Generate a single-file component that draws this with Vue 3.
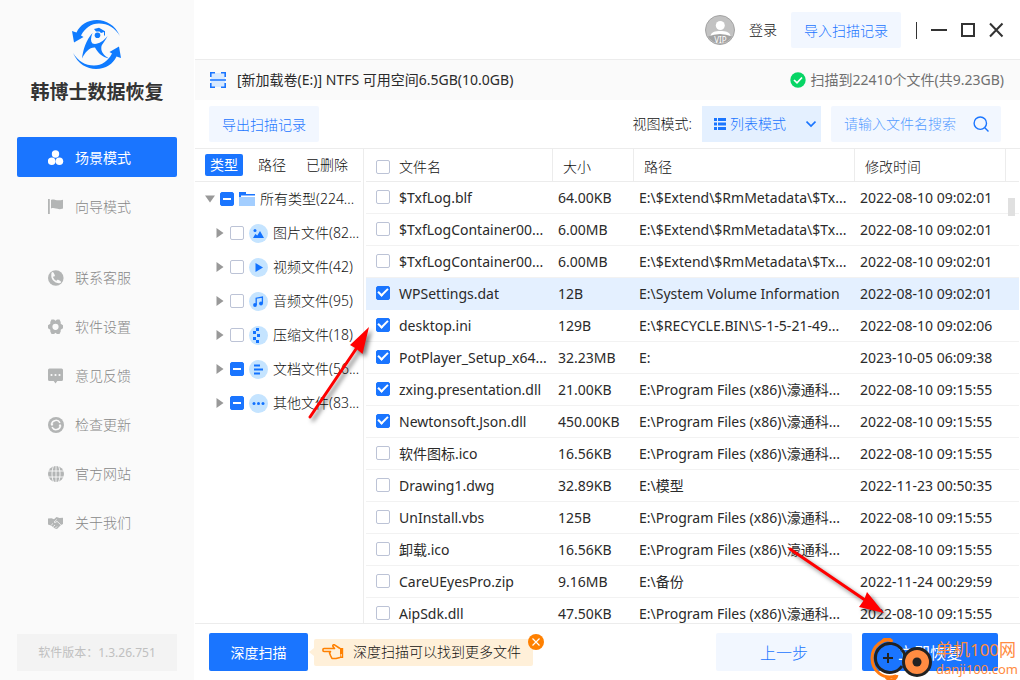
<script setup>
import { ref } from 'vue'

const nav = [
  { label: '场景模式', icon: 'scene', active: true },
  { label: '向导模式', icon: 'flag' },
  { label: '联系客服', icon: 'phone', spaced: true },
  { label: '软件设置', icon: 'gear' },
  { label: '意见反馈', icon: 'chat' },
  { label: '检查更新', icon: 'update' },
  { label: '官方网站', icon: 'globe' },
  { label: '关于我们', icon: 'hands' },
]

const tabs = ['类型', '路径', '已删除']

const tree = ref([
  { label: '图片文件(82...', icon: 'image', checked: false, mixed: false },
  { label: '视频文件(42)', icon: 'video', checked: false, mixed: false },
  { label: '音频文件(95)', icon: 'music', checked: false, mixed: false },
  { label: '压缩文件(18)', icon: 'zip', checked: false, mixed: false },
  { label: '文档文件(56...', icon: 'doc', checked: false, mixed: true },
  { label: '其他文件(83...', icon: 'other', checked: false, mixed: true },
])

const files = ref([
  { name: '$TxfLog.blf', size: '64.00KB', path: 'E:\\$Extend\\$RmMetadata\\$Tx...', time: '2022-08-10 09:02:01', checked: false },
  { name: '$TxfLogContainer00...', size: '6.00MB', path: 'E:\\$Extend\\$RmMetadata\\$Tx...', time: '2022-08-10 09:02:01', checked: false },
  { name: '$TxfLogContainer00...', size: '6.00MB', path: 'E:\\$Extend\\$RmMetadata\\$Tx...', time: '2022-08-10 09:02:01', checked: false },
  { name: 'WPSettings.dat', size: '12B', path: 'E:\\System Volume Information', time: '2022-08-10 09:02:01', checked: true, current: true },
  { name: 'desktop.ini', size: '129B', path: 'E:\\$RECYCLE.BIN\\S-1-5-21-49...', time: '2022-08-10 09:02:06', checked: true },
  { name: 'PotPlayer_Setup_x64...', size: '32.23MB', path: 'E:', time: '2023-10-05 06:09:38', checked: true },
  { name: 'zxing.presentation.dll', size: '21.00KB', path: 'E:\\Program Files (x86)\\濠通科...', time: '2022-08-10 09:15:55', checked: true },
  { name: 'Newtonsoft.Json.dll', size: '450.00KB', path: 'E:\\Program Files (x86)\\濠通科...', time: '2022-08-10 09:15:55', checked: true },
  { name: '软件图标.ico', size: '16.56KB', path: 'E:\\Program Files (x86)\\濠通科...', time: '2022-08-10 09:15:55', checked: false },
  { name: 'Drawing1.dwg', size: '32.89KB', path: 'E:\\模型', time: '2022-11-23 00:50:35', checked: false },
  { name: 'UnInstall.vbs', size: '125B', path: 'E:\\Program Files (x86)\\濠通科...', time: '2022-08-10 09:15:55', checked: false },
  { name: '卸载.ico', size: '16.56KB', path: 'E:\\Program Files (x86)\\濠通科...', time: '2022-08-10 09:15:55', checked: false },
  { name: 'CareUEyesPro.zip', size: '9.16MB', path: 'E:\\备份', time: '2022-11-24 00:29:59', checked: false },
  { name: 'AipSdk.dll', size: '47.50KB', path: 'E:\\Program Files (x86)\\濠通科...', time: '2022-08-10 09:15:55', checked: false },
])
</script>

<template>
  <div class="app">
    <aside class="sidebar">
      <svg class="logo" viewBox="0 0 50 50" fill="#0f7bff" aria-hidden="true">
        <path d="M48 16C43 5 34 0 25 0C15 0 8 5 4.500 12.500L0 11L2 22.500L11.500 17L9 15.500C13 8 19 3.500 27 3.500C36 3.500 43 8 48 16Z" />
        <path transform="rotate(180 24.500 24.500)" d="M48 16C43 5 34 0 25 0C15 0 8 5 4.500 12.500L0 11L2 22.500L11.500 17L9 15.500C13 8 19 3.500 27 3.500C36 3.500 43 8 48 16Z" />
        <circle cx="25.500" cy="15.300" r="2.800" />
        <path d="M22 9L27 7.800L33 11.200V15.500H32V12L29 13L27.500 11.500L24 11.500Z" />
        <path d="M10 38.500C11 30 14 20 20.500 13C18.500 18 18.500 21.500 20.500 23.500C25 25 31 22 35.500 16C33 22 29.500 24 29.300 27.500C29 32 32 35.500 37 38.500C30 37 26 33 23 27.500C18 27 13 32 10 38.500Z" />
      </svg>
      <h1 class="brand">韩博士数据恢复</h1>
      <nav class="nav">
        <a v-for="n in nav" :key="n.label" href="#" class="nav-item" :class="{ active: n.active, spaced: n.spaced }">
          <svg class="nav-icon" viewBox="0 0 16 16" fill="currentColor" aria-hidden="true">
            <g v-if="n.icon === 'scene'">
              <circle cx="7.500" cy="4" r="3.700" /><circle cx="3.700" cy="11.200" r="3.800" /><circle cx="11.400" cy="11.200" r="3.800" />
            </g>
            <g v-else-if="n.icon === 'flag'">
              <path d="M0 0H1.800V15H0ZM3 1C6-.5 8 2.500 15 .8V9.500C9 11.500 7 8 3 9.500Z" />
            </g>
            <g v-else-if="n.icon === 'phone'">
              <circle cx="7.800" cy="8" r="7.800" />
              <path d="M4.300 3.500C3 8.500 7 13 11.800 12.300" fill="none" stroke="#fafafa" stroke-width="1.600" />
              <path d="M4.600 3.200L5.800 5.600M9.600 10.800L11.900 12" stroke="#fafafa" stroke-width="2.200" stroke-linecap="round" />
            </g>
            <g v-else-if="n.icon === 'gear'">
              <path fill-rule="evenodd" d="M3.500.5H6L7.500 1.700L9 .5H11.500L12.700 3V4.800L15 6.200V9.300L12.700 10.700V12.500L11.500 15H9L7.500 13.800L6 15H3.500L2.300 12.500V10.700L0 9.300V6.200L2.300 4.800V3ZM7.500 4.700A3.100 3.100 0 1 0 7.500 10.900A3.100 3.100 0 1 0 7.500 4.700Z" />
            </g>
            <g v-else-if="n.icon === 'chat'">
              <path d="M1.500.5H13.500Q15 .5 15 2V11.500Q15 13 13.500 13H9.300L7.500 15.500L5.700 13H1.500Q0 13 0 11.500V2Q0 .5 1.500.5Z" />
              <g fill="#fafafa"><circle cx="3.500" cy="7" r="1.100" /><circle cx="7.500" cy="7" r="1.100" /><circle cx="11.500" cy="7" r="1.100" /></g>
            </g>
            <g v-else-if="n.icon === 'update'">
              <circle cx="8" cy="8" r="8" />
              <path d="M3.600 7A4.500 4.500 0 0 1 12 5.800M12.400 9A4.500 4.500 0 0 1 4 10.200" fill="none" stroke="#fafafa" stroke-width="1.500" />
              <path d="M2.300 6.800H5.500L4 9.200ZM13.700 9.200H10.500L12 6.800Z" fill="#fafafa" />
            </g>
            <g v-else-if="n.icon === 'globe'">
              <circle cx="8" cy="8" r="8" />
              <path d="M0 5H16M0 11H16M8 0V16M5.500 0C3.500 5 3.500 11 5.500 16M10.500 0C12.500 5 12.500 11 10.500 16" fill="none" stroke="#fafafa" stroke-width="0.900" />
            </g>
            <g v-else>
              <path d="M0 3.500L3.500 3.200L6 4.200L8.500 2L11.500 3L15 2.800V9L13 10L9 14L7 13.500L3 10.500L0 9.500Z" />
              <path d="M8.800 4.500L6 7.200Q8 8 9 6.300L12.800 9.800M3.300 10L5 8.500M5.300 11.600L7 10M7.500 13L9 11.500" fill="none" stroke="#fafafa" stroke-width="0.800" />
            </g>
          </svg>
          <span>{{ n.label }}</span>
        </a>
      </nav>
      <div class="version">软件版本：1.3.26.751</div>
    </aside>

    <main class="main">
      <header class="titlebar">
        <svg class="avatar" viewBox="0 0 30 30" aria-hidden="true">
          <circle cx="15" cy="15" r="14.500" fill="#c2c2c2" stroke="#a3a3a3" />
          <circle cx="15.300" cy="10.500" r="4.500" fill="#fff" />
          <path d="M5.500 21C6 17 10 16 15.300 16S25 17 25.500 21Z" fill="#fff" />
          <path d="M3 21.500Q15 16.500 27 21.500A14 14 0 0 1 3 21.500Z" fill="#a3a3a3" />
          <text x="15.500" y="27.500" text-anchor="middle" class="vip">VIP</text>
        </svg>
        <a href="#" class="login">登录</a>
        <button class="btn soft import">导入扫描记录</button>
        <span class="divider"></span>
        <button class="win" aria-label="最小化"><svg viewBox="0 0 16 16"><path d="M0 8H16" /></svg></button>
        <button class="win" aria-label="最大化"><svg viewBox="0 0 16 16"><path d="M2 2H14V14H2Z" /></svg></button>
        <button class="win" aria-label="关闭"><svg viewBox="0 0 16 16"><path d="M1 1.500L13.500 14.500M13.500 1.500L1 14.500" /></svg></button>
      </header>

      <section class="status">
        <svg class="scan" viewBox="0 0 16 16" aria-hidden="true">
          <rect x="1" y="1" width="14" height="14" fill="#d9eaff" />
          <path d="M.8 5V.8H5M11 .8H15.200V5M15.200 11V15.200H11M5 15.200H.8V11M0 8H16" fill="none" stroke="#1a75ff" stroke-width="1.600" />
        </svg>
        <span class="volume">[新加载卷(E:)] NTFS 可用空间6.5GB(10.0GB)</span>
        <svg class="ok" viewBox="0 0 16 16" aria-hidden="true">
          <circle cx="8" cy="8" r="7.700" fill="#07d565" />
          <path d="M4 8L7 10.800L12 5.500" fill="none" stroke="#fff" stroke-width="1.700" />
        </svg>
        <span class="found">扫描到22410个文件(共9.23GB)</span>
      </section>

      <section class="toolbar">
        <button class="btn soft">导出扫描记录</button>
        <label class="view-label" for="view">视图模式:</label>
        <div class="select-box">
          <svg class="list-icon" viewBox="0 0 12 12" fill="#1a75ff" aria-hidden="true">
            <path d="M0 0H3V3H0ZM4 0H12V3H4ZM0 4.500H3V7.500H0ZM4 4.500H12V7.500H4ZM0 9H3V12H0ZM4 9H12V12H4Z" />
          </svg>
          <select id="view"><option>列表模式</option></select>
          <svg class="chev" viewBox="0 0 10 8" aria-hidden="true"><path d="M.5 1.500L5 6L9.500 1.500" fill="none" stroke="#1a75ff" stroke-width="1.700" /></svg>
        </div>
        <div class="search">
          <input type="text" placeholder="请输入文件名搜索" aria-label="搜索文件名" />
          <svg viewBox="0 0 16 16" aria-hidden="true"><path d="M7.300 1A6.200 6.200 0 1 1 7.300 13.400A6.200 6.200 0 1 1 7.300 1ZM11.800 11.800L15.500 15.500" fill="none" stroke="#1a75ff" stroke-width="1.400" /></svg>
        </div>
      </section>

      <div class="panes">
        <section class="tree-pane">
          <div class="tabs">
            <button v-for="(t, i) in tabs" :key="t" class="tab" :class="{ on: i === 0 }">{{ t }}</button>
          </div>
          <label class="tree-row root">
            <svg class="tri" viewBox="0 0 10 10" fill="#999" aria-hidden="true"><path d="M0 1.500H10L5 8.500Z" /></svg>
            <input type="checkbox" :indeterminate="true" />
            <svg class="folder" viewBox="0 0 16 14" aria-hidden="true">
              <path d="M0 0H7V2H16V5H0Z" fill="#1a75ff" /><path d="M2 3.500H16V5H2Z" fill="#fff" /><path d="M0 5H16V14H0Z" fill="#a3ceff" />
            </svg>
            <span>所有类型(224...</span>
          </label>
          <label v-for="t in tree" :key="t.label" class="tree-row">
            <svg class="tri" viewBox="0 0 10 10" fill="#999" aria-hidden="true"><path d="M1.500 0L8.500 5L1.500 10Z" /></svg>
            <input v-model="t.checked" type="checkbox" :indeterminate="t.mixed" />
            <svg class="kind" viewBox="0 0 19 19" fill="#1272ff" aria-hidden="true">
              <circle cx="9.500" cy="9.500" r="9.500" fill="#c5e4ff" />
              <g v-if="t.icon === 'image'"><circle cx="6" cy="6.500" r="1.500" /><path d="M4 14L6.300 10L8.300 11.500L11 7L15 14Z" /></g>
              <path v-else-if="t.icon === 'video'" d="M6.500 5L14 9.500L6.500 14Z" />
              <g v-else-if="t.icon === 'music'"><circle cx="6" cy="13" r="1.900" /><circle cx="12" cy="11.500" r="1.900" /><path d="M7.200 13V6.200L13.400 5V11.500" fill="none" stroke="#1272ff" stroke-width="1.300" /></g>
              <path v-else-if="t.icon === 'zip'" d="M7 2H10V5H7ZM4 5H7V8H4ZM8 8H11V11H8ZM4 11H7V14H4ZM7 14H10V17H7Z" />
              <path v-else-if="t.icon === 'doc'" d="M5 5.500H11M5 9.500H14M5 13.500H11" stroke="#1272ff" stroke-width="1.800" />
              <g v-else><circle cx="5" cy="9.500" r="1.500" /><circle cx="9.500" cy="9.500" r="1.500" /><circle cx="14" cy="9.500" r="1.500" /></g>
            </svg>
            <span>{{ t.label }}</span>
          </label>
        </section>

        <section class="list-pane">
          <table class="files">
            <colgroup>
              <col class="c-check" /><col class="c-name" /><col class="c-size" /><col /><col class="c-time" /><col class="c-end" />
            </colgroup>
            <thead>
              <tr>
                <th class="check"><input type="checkbox" aria-label="全选" /></th>
                <th class="name">文件名</th>
                <th>大小</th>
                <th>路径</th>
                <th>修改时间</th>
                <th class="end"></th>
              </tr>
            </thead>
            <tbody>
              <tr v-for="(f, i) in files" :key="i" :class="{ current: f.current }">
                <td class="check"><input v-model="f.checked" type="checkbox" :aria-label="f.name" /></td>
                <td class="name">{{ f.name }}</td>
                <td>{{ f.size }}</td>
                <td>{{ f.path }}</td>
                <td>{{ f.time }}</td>
                <td></td>
              </tr>
            </tbody>
          </table>
          <span class="thumb"></span>
        </section>
      </div>

      <footer class="footer">
        <button class="btn primary deep">深度扫描</button>
        <div class="tip">
          <svg class="hand" viewBox="0 0 22 16" fill="none" stroke="#ff8000" stroke-width="1.600" stroke-linejoin="round" aria-hidden="true">
            <path d="M18 4.500L12.500 .8C11 .5 10.500 1.500 11 2.500L12.500 4.500H2C.5 4.500.5 7.500 2 7.500H8.500L7.500 9L8.500 11.500L10 14.500H14L18 13.500" />
            <path d="M18 4H21.200V14H18Z" fill="#ff8000" stroke="none" /><path d="M19.200 10V12.500" stroke="#fff0d9" stroke-width="1" />
          </svg>
          <span>深度扫描可以找到更多文件</span>
          <button class="tip-close" aria-label="关闭提示"><svg viewBox="0 0 16 16"><circle cx="8" cy="8" r="8" fill="#ff8000" /><path d="M4.500 4.500L11.500 11.500M11.500 4.500L4.500 11.500" stroke="#fff" stroke-width="1.200" /></svg></button>
        </div>
        <button class="btn soft step">上一步</button>
        <button class="btn primary step">立即恢复</button>
      </footer>
    </main>

    <svg class="arrow arrow-up" viewBox="0 0 70 100" aria-hidden="true">
      <path d="M6 92L52 24" stroke="#f00" stroke-width="3" stroke-linecap="round" /><path d="M65 2L58.500 29L52 23.500L46 20Z" fill="#f00" />
    </svg>
    <svg class="arrow arrow-down" viewBox="0 0 110 80" aria-hidden="true">
      <path d="M5 4L80 55" stroke="#f00" stroke-width="3" stroke-linecap="round" /><path d="M99 68L74 62L79 55L82 47Z" fill="#f00" />
    </svg>
    <div class="watermark">
      <svg viewBox="0 0 64 44" fill="none" aria-hidden="true">
        <path d="M22 3C14-1 2 8 2 20C2 33 13 42 26 38" stroke="#ff7a10" stroke-width="3" />
        <path d="M12 4C15-1 20 0 22 4M16 39C20 44 26 42 27 37" stroke="#ff7a10" stroke-width="3" />
        <path d="M32 12A14.500 14.500 0 1 0 32 28" stroke="#222" stroke-width="3" />
        <path d="M18 15V25M13 20H23" stroke="#222" stroke-width="2" />
        <path d="M32 12Q36 16 34 22" stroke="#222" stroke-width="3" />
        <circle cx="47" cy="24" r="13.500" fill="#ff8c42" stroke="#222" stroke-width="3" />
        <circle cx="47" cy="24" r="4.500" fill="#222" />
      </svg>
      <div class="wm-text"><span class="wm-name">单机100网</span><span class="wm-url">danji100.com</span></div>
    </div>
  </div>
</template>

<style>
body {
  margin: 0;
}
</style>

<style scoped>
.app {
  position: relative;
  display: flex;
  height: 100vh;
  overflow: hidden;
  background: #fff;
  color: #111;
  font: 300 14px/20px "Noto Sans", "Noto Sans CJK SC", sans-serif;
}
.app * {
  box-sizing: border-box;
}
button,
input,
select {
  margin: 0;
  padding: 0;
  border: 0;
  background: none;
  font: inherit;
  color: inherit;
}
a {
  color: inherit;
  text-decoration: none;
}
svg {
  display: block;
  flex: none;
}

.sidebar {
  display: flex;
  flex: none;
  flex-direction: column;
  width: 194px;
  margin-right: 1px;
  padding: 20px 17px 9px;
  background: #fafafa;
}
.logo {
  width: 50px;
  height: 50px;
  margin-left: 55px;
}
.brand {
  margin: 8px 0 31px;
  color: #333;
  font-size: 19px;
  line-height: 28px;
  font-weight: 700;
  text-align: center;
  white-space: nowrap;
}
.nav {
  display: flex;
  flex: 1;
  flex-direction: column;
  gap: 9px;
}
.nav-item {
  display: flex;
  align-items: center;
  gap: 11px;
  height: 40px;
  padding: 2px 0 0 31px;
  border-radius: 2px;
  color: #888;
}
.nav-item.spaced {
  margin-top: 22px;
}
.nav-icon {
  width: 16px;
  height: 16px;
  color: #b3b5b5;
}
.nav-item.active {
  background: #1a75ff;
  color: #fff;
  font-weight: 400;
}
.active .nav-icon {
  color: #fff;
}
.version {
  height: 37px;
  background: #f3f3f3;
  color: #c0c0c0;
  font-size: 12px;
  line-height: 37px;
  font-weight: 400;
  text-align: center;
}

.main {
  display: flex;
  flex: 1;
  flex-direction: column;
  min-width: 0;
}
.btn {
  height: 36px;
  padding-top: 2px;
  border-radius: 2px;
  white-space: nowrap;
}
.soft {
  width: 110px;
  background: #f2f7ff;
  color: #1a75ff;
}
.primary {
  background: #1a75ff;
  color: #fff;
  font-weight: 400;
}
.titlebar {
  display: flex;
  flex: none;
  align-items: center;
  justify-content: flex-end;
  height: 60px;
  padding: 1px 15px 0 0;
  border-bottom: 1px solid #ececec;
}
.avatar {
  width: 30px;
  height: 30px;
}
.vip {
  fill: #fff;
  font-size: 8px;
  font-weight: 400;
}
.login {
  margin: 0 14px;
}
.divider {
  width: 1px;
  height: 17px;
  margin: 0 -1px 0 15px;
  background: #333;
}
.win {
  width: 16px;
  height: 16px;
  margin-left: 13px;
}
.divider + .win {
  margin-left: 15px;
}
.win svg {
  width: 16px;
  height: 16px;
  fill: none;
  stroke: #333;
  stroke-width: 2;
}
.status {
  display: flex;
  flex: none;
  align-items: center;
  height: 40px;
  padding: 0 16px 0 15px;
  background: #fafafa;
  color: #2a2a2a;
  font-weight: 400;
}
.scan {
  width: 16px;
  height: 16px;
  margin-right: 11px;
}
.volume {
  flex: 1;
}
.ok {
  width: 16px;
  height: 16px;
  margin-right: 4px;
}
.found {
  color: #707070;
}
.toolbar {
  display: flex;
  flex: none;
  align-items: center;
  height: 49px;
  padding: 0 19px 0 14px;
  border-bottom: 1px solid #ececec;
}
.view-label {
  margin: 0 10px 0 auto;
}
.select-box,
.search {
  position: relative;
  display: flex;
  align-items: center;
  height: 36px;
}
.select-box {
  width: 119px;
  background: #e4f0ff;
  color: #1a75ff;
}
.select-box select {
  width: 100%;
  height: 100%;
  padding-left: 28px;
  appearance: none;
}
.list-icon {
  position: absolute;
  left: 12px;
  width: 12px;
  height: 12px;
}
.chev {
  position: absolute;
  right: 5px;
  width: 10px;
  height: 8px;
}
.search {
  width: 170px;
  margin-left: 10px;
  padding: 0 12px 0 13px;
  border-radius: 2px;
  background: #f2f7ff;
}
.search input {
  flex: 1;
  min-width: 0;
  outline: 0;
}
.search input::placeholder {
  color: #559cff;
  opacity: 1;
}
.search svg {
  width: 16px;
  height: 16px;
}

.panes {
  display: flex;
  flex: 1;
  min-height: 0;
}
.tree-pane {
  flex: none;
  width: 169px;
  padding-right: 2px;
  border-right: 1px solid #ececec;
}
.tabs {
  display: flex;
  align-items: center;
  gap: 10px;
  height: 33px;
  padding-left: 10px;
  border-bottom: 1px solid #ececec;
}
.tab {
  height: 22px;
  padding: 0 5px;
  border-radius: 2px;
  line-height: 22px;
}
.tab.on {
  background: #1a75ff;
  color: #fff;
  font-weight: 400;
}
.tree-row {
  display: flex;
  align-items: center;
  gap: 5px;
  height: 34px;
  padding-left: 20px;
  white-space: nowrap;
}
.tree-row.root {
  padding-left: 10px;
}
.tri {
  width: 10px;
  height: 10px;
}
.folder {
  width: 16px;
  height: 14px;
}
.kind {
  width: 19px;
  height: 19px;
}
input[type="checkbox"] {
  display: flex;
  flex: none;
  align-items: center;
  justify-content: center;
  width: 14px;
  height: 14px;
  border: 1px solid #bcc3d6;
  border-radius: 2px;
  background: #fff;
  appearance: none;
}
input[type="checkbox"]:checked,
input[type="checkbox"]:indeterminate {
  border-color: #1a75ff;
  background: #1a75ff;
}
input[type="checkbox"]:indeterminate::before {
  content: "";
  width: 8px;
  height: 2px;
  background: #fff;
}
input[type="checkbox"]:checked::before {
  content: "";
  width: 8px;
  height: 4px;
  margin-bottom: 3px;
  border: solid #fff;
  border-width: 0 0 2px 2px;
  transform: rotate(-45deg);
}

.list-pane {
  position: relative;
  flex: 1;
  min-width: 0;
  padding: 0 1px 0 2px;
  overflow: hidden;
}
.files {
  width: 100%;
  border-spacing: 0;
  table-layout: fixed;
}
.c-check {
  width: 33px;
}
.c-name {
  width: 154px;
}
.c-size {
  width: 81px;
}
.c-time {
  width: 151px;
}
.c-end {
  width: 13px;
}
th {
  height: 33px;
  padding: 3px 0 0 10px;
  border-right: 1px solid #ececec;
  border-bottom: 1px solid #ececec;
  font-weight: 300;
  text-align: left;
}
th.check,
th.end {
  border-right: 0;
}
td {
  height: 32px;
  padding: 0 0 0 5px;
  border-bottom: 1px solid #f2f2f2;
  color: #2a2a2a;
  font-weight: 400;
  white-space: nowrap;
}
.files .check {
  padding-left: 10px;
}
td.check {
  padding-bottom: 2px;
}
.files .name {
  padding-left: 0;
}
.current td {
  border-color: #e4f0ff;
  background: #e4f0ff;
}
.thumb {
  position: absolute;
  top: 49px;
  right: 5px;
  width: 7px;
  height: 18px;
  background: #e0e0e0;
}

.footer {
  display: flex;
  flex: none;
  align-items: center;
  gap: 10px;
  height: 57px;
  padding: 0 22px 0 14px;
  border-top: 1px solid #ececec;
}
.footer .btn {
  height: 38px;
}
.deep {
  width: 99px;
}
.tip {
  position: relative;
  display: flex;
  align-items: center;
  gap: 9px;
  height: 27px;
  margin: 0 auto 0 -4px;
  padding: 0 12px 0 8px;
  border-radius: 2px;
  background: #fff0d9;
}
.tip::before {
  content: "";
  position: absolute;
  left: -5px;
  border: solid transparent;
  border-width: 4px 5px 4px 0;
  border-right-color: #fff0d9;
}
.hand {
  width: 22px;
  height: 16px;
}
.tip-close {
  position: absolute;
  top: -5px;
  right: -11px;
  width: 16px;
  height: 16px;
}
.footer .step {
  width: 136px;
  font-size: 16px;
}

.arrow {
  position: absolute;
  pointer-events: none;
  filter: drop-shadow(3px 3px 2px rgba(0, 0, 0, 0.5));
}
.arrow-up {
  left: 304px;
  top: 325px;
  width: 70px;
  height: 100px;
}
.arrow-down {
  left: 785px;
  top: 545px;
  width: 110px;
  height: 80px;
}
.watermark {
  position: absolute;
  right: 2px;
  bottom: -2px;
  display: flex;
  gap: 2px;
  pointer-events: none;
}
.watermark svg {
  width: 64px;
  height: 44px;
}
.wm-text {
  display: flex;
  flex-direction: column;
  color: #ff8c42;
  font-weight: 400;
}
.wm-name {
  font-size: 17px;
  line-height: 24px;
}
.wm-url {
  font-size: 13px;
  line-height: 14px;
}
</style>
